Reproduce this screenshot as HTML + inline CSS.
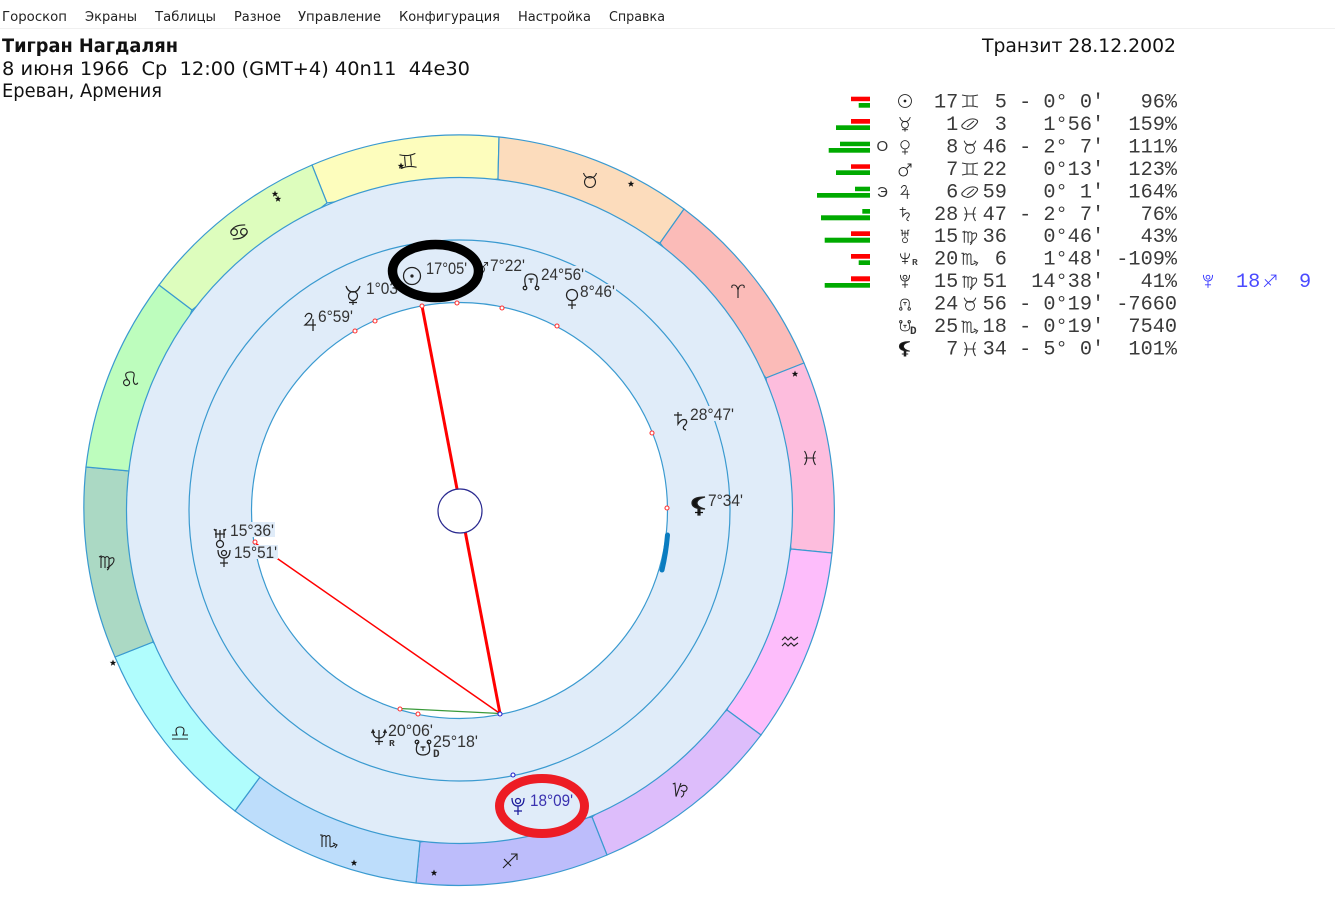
<!DOCTYPE html>
<html lang="ru">
<head>
<meta charset="utf-8">
<title>Транзит</title>
<style>
html,body{margin:0;padding:0;background:#fff;width:1335px;height:900px;overflow:hidden}
svg{display:block}
.m{font:13px "DejaVu Sans","Liberation Sans",sans-serif;fill:#222}
.h{font:19px "DejaVu Sans","Liberation Sans",sans-serif;fill:#111}
.l{font:16.5px "Liberation Sans",sans-serif;fill:#333}
.t{font:20.25px "Liberation Mono",monospace;fill:#3a3a3a;white-space:pre}
.i{fill:none;stroke:#222;stroke-width:1.25}
.s{fill:none;stroke:#222;stroke-width:1.1}
.z path{stroke:#3a9ad0;stroke-width:1.2}
.g{fill:#0a0;}
.r{fill:#f00;}
.dr{fill:#fff;stroke:#f33;stroke-width:1.1}
.db{fill:#fff;stroke:#22c;stroke-width:1.1}
.st{fill:#111;stroke:none}
</style>
</head>
<body>
<svg width="1335" height="900" viewBox="0 0 1335 900" xmlns="http://www.w3.org/2000/svg">
<rect width="1335" height="900" fill="#fff"/>
<rect x="0" y="28" width="1335" height="1" fill="#f0f0f0"/>

<text class="m" x="2" y="21" textLength="65" lengthAdjust="spacingAndGlyphs">Гороскоп</text>
<text class="m" x="85" y="21" textLength="52" lengthAdjust="spacingAndGlyphs">Экраны</text>
<text class="m" x="155" y="21" textLength="61" lengthAdjust="spacingAndGlyphs">Таблицы</text>
<text class="m" x="234" y="21" textLength="47" lengthAdjust="spacingAndGlyphs">Разное</text>
<text class="m" x="298" y="21" textLength="83" lengthAdjust="spacingAndGlyphs">Управление</text>
<text class="m" x="399" y="21" textLength="101" lengthAdjust="spacingAndGlyphs">Конфигурация</text>
<text class="m" x="518" y="21" textLength="73" lengthAdjust="spacingAndGlyphs">Настройка</text>
<text class="m" x="609" y="21" textLength="56" lengthAdjust="spacingAndGlyphs">Справка</text>

<text class="h" x="2" y="52" style="font-weight:700" textLength="176" lengthAdjust="spacingAndGlyphs">Тигран Нагдалян</text>
<text class="h" x="2" y="75" style="white-space:pre" textLength="468" lengthAdjust="spacingAndGlyphs">8 июня 1966  Ср  12:00 (GMT+4) 40n11  44e30</text>
<text class="h" x="2" y="97" textLength="160" lengthAdjust="spacingAndGlyphs">Ереван, Армения</text>
<text class="h" x="982" y="52" textLength="194" lengthAdjust="spacingAndGlyphs">Транзит 28.12.2002</text>

<!-- zodiac ring -->
<g class="z">
<path fill="#fdfdbd" d="M312 165A375.500 375.500 0 0 1 499 137L498 179L327 203Z"/>
<path fill="#fcdcbc" d="M499 137A375.500 375.500 0 0 1 684 209L660 243L498 179Z"/>
<path fill="#fbbbb8" d="M684 209A375.500 375.500 0 0 1 804 363L766 378L660 243Z"/>
<path fill="#fdbddd" d="M804 363A375.500 375.500 0 0 1 832 553L791 549L766 378Z"/>
<path fill="#fdbdfb" d="M832 553A375.500 375.500 0 0 1 761 735L727 710L791 549Z"/>
<path fill="#ddbdfb" d="M761 735A375.500 375.500 0 0 1 607 855L592 817L727 710Z"/>
<path fill="#bdbdfb" d="M607 855A375.500 375.500 0 0 1 416 883L420 842L592 817Z"/>
<path fill="#bdddfb" d="M416 883A375.500 375.500 0 0 1 235 811L260 777L420 842Z"/>
<path fill="#b0fdfd" d="M235 811A375.500 375.500 0 0 1 115 657L153 642L260 777Z"/>
<path fill="#abd9c4" d="M115 657A375.500 375.500 0 0 1 86 467L129 471L153 642Z"/>
<path fill="#bdfdbd" d="M86 467A375.500 375.500 0 0 1 159 285L192 310L129 471Z"/>
<path fill="#ddfdbd" d="M159 285A375.500 375.500 0 0 1 312 165L327 203L192 310Z"/>
</g>

<circle cx="459.500" cy="510.500" r="333" fill="#e0ecf9" stroke="#3a9ad0" stroke-width="1.2"/>
<circle cx="459.500" cy="510.500" r="270.500" fill="none" stroke="#3a9ad0" stroke-width="1.2"/>
<circle cx="459.500" cy="510.500" r="208" fill="#fff" stroke="#3a9ad0" stroke-width="1.2"/>

<!-- thick arc -->
<path d="M667.500 535Q666 553 662 570" fill="none" stroke="#0a7cc0" stroke-width="5" stroke-linecap="round"/>

<!-- aspect lines -->
<path d="M399.500 708.500L500 713.500" stroke="#3a9a3a" stroke-width="1.300" fill="none"/>
<path d="M255 543L500 713.500" stroke="#f00" stroke-width="1.500" fill="none"/>
<path d="M422 306L500 713.500" stroke="#f00" stroke-width="3" fill="none"/>
<circle cx="460" cy="511" r="22" fill="#fff" stroke="#2a2a90" stroke-width="1.200"/>

<!-- aspect dots -->
<circle class="dr" cx="422" cy="306" r="2"/>
<circle class="dr" cx="457" cy="303" r="2"/>
<circle class="dr" cx="502" cy="308" r="2"/>
<circle class="dr" cx="557" cy="326" r="2"/>
<circle class="dr" cx="375" cy="321" r="2"/>
<circle class="dr" cx="355" cy="331" r="2"/>
<circle class="dr" cx="652" cy="433" r="2"/>
<circle class="dr" cx="667" cy="508" r="2"/>
<circle class="dr" cx="255" cy="542" r="2"/>
<circle class="dr" cx="400" cy="709" r="2"/>
<circle class="dr" cx="418" cy="714" r="2"/>
<circle class="db" cx="500" cy="714" r="2"/>
<circle class="db" cx="513" cy="775" r="2"/>

<!-- label backgrounds -->
<g fill="#e0ecf9">
<rect x="230" y="522" width="45" height="15"/>
<rect x="234" y="545" width="44" height="14"/>
<rect x="690" y="406" width="44" height="15"/>
<rect x="541" y="266" width="44" height="15"/>
<rect x="580" y="284" width="36" height="14"/>
</g>

<!-- chart labels -->
<text class="l" x="426" y="274" textLength="41" lengthAdjust="spacingAndGlyphs">17°05'</text>
<text class="l" x="366" y="294" textLength="35" lengthAdjust="spacingAndGlyphs">1°03'</text>
<text class="l" x="318" y="322" textLength="35" lengthAdjust="spacingAndGlyphs">6°59'</text>
<text class="l" x="490" y="271" textLength="35" lengthAdjust="spacingAndGlyphs">7°22'</text>
<text class="l" x="541" y="280" textLength="43" lengthAdjust="spacingAndGlyphs">24°56'</text>
<text class="l" x="580" y="297" textLength="35" lengthAdjust="spacingAndGlyphs">8°46'</text>
<text class="l" x="690" y="420" textLength="44" lengthAdjust="spacingAndGlyphs">28°47'</text>
<text class="l" x="708" y="506" textLength="35" lengthAdjust="spacingAndGlyphs">7°34'</text>
<text class="l" x="230" y="536" textLength="44" lengthAdjust="spacingAndGlyphs">15°36'</text>
<text class="l" x="234" y="558" textLength="43" lengthAdjust="spacingAndGlyphs">15°51'</text>
<text class="l" x="388" y="736" textLength="45" lengthAdjust="spacingAndGlyphs">20°06'</text>
<text class="l" x="433" y="747" textLength="45" lengthAdjust="spacingAndGlyphs">25°18'</text>
<text class="l" x="530" y="806" textLength="43" lengthAdjust="spacingAndGlyphs" style="fill:#3a32b0">18°09'</text>

<!-- chart planets -->
<g class="i">
<g transform="translate(412 276)"><circle r="8.500"/><circle r="1" fill="#222"/></g>
<g transform="translate(353 295)"><path d="M-7-9Q-5-3 0-3Q5-3 7-9M0 5V10M-4 7.500H4"/><circle cy="1" r="4.500"/></g>
<g transform="translate(310 322)"><path d="M-5-5Q-3-10 1-8Q4-5-5 3H6M3-3V9"/></g>
<g transform="translate(482 268) scale(.7)"><circle cx="-2" cy="2" r="5.500"/><path d="M2-2L8-8M3-8H8V-3"/></g>
<g transform="translate(531 281)"><path d="M-5 6Q-9-7 0-7Q9-7 5 6M-2.500-2H2.500M0-2V2"/><circle cx="-6" cy="7" r="1.800"/><circle cx="6" cy="7" r="1.800"/></g>
<g transform="translate(572 298)"><circle cy="-3" r="5.500"/><path d="M0 2.500V11M-4 7H4"/></g>
<g transform="translate(681 421)"><path d="M-7-6H1M-3-9V3Q1-3 5-1Q7 2 3 5Q1 8 5 9"/></g>
<g transform="translate(699 505)"><path fill="#111" d="M6-8Q-7-8-7-2Q-7 4 6 4Q-2 2-2-2Q-2-6 6-8ZM-1 3H1V10H-1Z"/><path d="M-4 7.500H4" stroke="#111"/></g>
<g transform="translate(220 538)"><path d="M-6-9Q-4-6-4-9V0M6-9Q4-6 4-9V0M-5-4H5M0-8V2"/><circle cy="6" r="3.500"/></g>
<g transform="translate(224 558)"><path d="M-6-8Q-6 0 0 0Q6 0 6-8M0 0V9M-4 5H4"/><circle cy="-5" r="2.500"/></g>
<g transform="translate(379 737)"><path d="M-6-6Q-6 1 0 1Q6 1 6-6M0-7V8M-4 4.500H4M-7.500-4L-6-7L-4.500-4M4.500-4L6-7L7.500-4"/></g>
<g transform="translate(423 748)"><path d="M-5-6Q-10 7 0 7Q10 7 5-6M-2.500-1H2.500M0-1V3"/><circle cx="-6" cy="-6" r="1.800"/><circle cx="6" cy="-6" r="1.800"/></g>
<g transform="translate(518 806)" style="stroke:#1a1a9a"><path d="M-6-8Q-6 0 0 0Q6 0 6-8M0 0V9M-4 5H4"/><circle cy="-5" r="2.500"/></g>
</g>
<text x="389" y="746" style="font:bold 9.500px 'Liberation Mono',monospace;fill:#333">R</text>
<text x="433" y="757" style="font:bold 11px 'Liberation Mono',monospace;fill:#333">D</text>

<!-- ring signs -->
<g class="s">
<g transform="translate(408 161) rotate(-5)"><path d="M-8-7Q0-4 8-7M-8 7Q0 4 8 7M-3-5V5M3-5V5"/></g>
<g transform="translate(590 180)"><path d="M-6.500-7Q-5-2 0-2Q5-2 6.500-7"/><circle cy="2" r="5.500"/></g>
<g transform="translate(738 291)"><path d="M0 7V-1Q-1-6-4-6Q-7-6-6-3M0-1Q1-6 4-6Q7-6 6-3"/></g>
<g transform="translate(810 458)"><path d="M-5.500-7Q-1 0-5.500 7M5.500-7Q1 0 5.500 7M-5.500 0H5.500"/></g>
<g transform="translate(790 642)"><path d="M-8-2L-5-5L-2-2L1-5L4-2L8-5M-8 4L-5 1L-2 4L1 1L4 4L8 1"/></g>
<g transform="translate(680 790) rotate(8)"><path d="M-8-5L-6-6L-3 7L0-7M0-3Q2-6 5-5Q8-3 6 0Q4 2 1 0M4 1Q5 5 2 7"/></g>
<g transform="translate(510 861)"><path d="M-7 7L7-7M1-7H7V-1M-6-2L1 5"/></g>
<g transform="translate(329 841)"><path d="M-9-6L-7-6V6M-7-4Q-4-7-3-4V6M-3-4Q0-7 1-4V5Q1 7 6 4M4 2L8 4L6 7"/></g>
<g transform="translate(180 732)"><path d="M-8 7H8M-8 3H-3Q-6-5 0-5Q6-5 3 3H8"/></g>
<g transform="translate(107 562)"><path d="M-8-5L-6-6V6M-6-4Q-4-7-2-4V6M-2-4Q0-7 2-4V5Q2 7 0 8M2-3Q7-6 7-2Q7 2 0 6"/></g>
<g transform="translate(130 379) rotate(-10)"><circle cx="-4" cy="3" r="3"/><path d="M-2 1Q-6-7 0-7Q7-7 4-1Q2 4 4 6Q6 7 7 5"/></g>
<g transform="translate(239 232) rotate(-28) scale(1.1)"><circle cx="-4" cy="-2" r="3"/><circle cx="4" cy="2" r="3"/><path d="M-6-4Q-1-8 8-3M6 4Q1 8-8 3"/></g>
</g>

<!-- ring stars -->
<g class="st">
<path transform="translate(275 194)" d="M0-3.500L.9-1.100L3.300-1.100L1.400.4L2.100 2.800L0 1.400L-2.100 2.800L-1.400.4L-3.300-1.100L-.9-1.100Z"/>
<path transform="translate(278 199)" d="M0-3.500L.9-1.100L3.300-1.100L1.400.4L2.100 2.800L0 1.400L-2.100 2.800L-1.400.4L-3.300-1.100L-.9-1.100Z"/>
<path transform="translate(401 166)" d="M0-3.500L.9-1.100L3.300-1.100L1.400.4L2.100 2.800L0 1.400L-2.100 2.800L-1.400.4L-3.300-1.100L-.9-1.100Z"/>
<path transform="translate(631 184)" d="M0-3.500L.9-1.100L3.300-1.100L1.400.4L2.100 2.800L0 1.400L-2.100 2.800L-1.400.4L-3.300-1.100L-.9-1.100Z"/>
<path transform="translate(795 374)" d="M0-3.500L.9-1.100L3.300-1.100L1.400.4L2.100 2.800L0 1.400L-2.100 2.800L-1.400.4L-3.300-1.100L-.9-1.100Z"/>
<path transform="translate(113 663)" d="M0-3.500L.9-1.100L3.300-1.100L1.400.4L2.100 2.800L0 1.400L-2.100 2.800L-1.400.4L-3.300-1.100L-.9-1.100Z"/>
<path transform="translate(354 863)" d="M0-3.500L.9-1.100L3.300-1.100L1.400.4L2.100 2.800L0 1.400L-2.100 2.800L-1.400.4L-3.300-1.100L-.9-1.100Z"/>
<path transform="translate(434 873)" d="M0-3.500L.9-1.100L3.300-1.100L1.400.4L2.100 2.800L0 1.400L-2.100 2.800L-1.400.4L-3.300-1.100L-.9-1.100Z"/>
</g>

<!-- highlight ellipses -->
<ellipse cx="435.500" cy="271" rx="43" ry="26.500" fill="none" stroke="#000" stroke-width="9.500"/>
<ellipse cx="542" cy="806" rx="42.500" ry="27.500" fill="none" stroke="#ed1c24" stroke-width="9"/>

<!-- bars -->
<rect class="r" x="851" y="96.700" width="19" height="4.500"/><rect class="g" x="858.700" y="103" width="11.300" height="4.700"/>
<rect class="r" x="851" y="119" width="19" height="4.700"/><rect class="g" x="836" y="125.300" width="34" height="4.700"/>
<rect class="g" x="840" y="141.700" width="30" height="4.500"/><rect class="g" x="828.700" y="148" width="41.300" height="4.700"/>
<rect class="r" x="851" y="164.300" width="19" height="4.500"/><rect class="g" x="836" y="170.300" width="34" height="4.700"/>
<rect class="g" x="855" y="186.700" width="15" height="4.500"/><rect class="g" x="817" y="193" width="53" height="4.700"/>
<rect class="g" x="862.300" y="209" width="7.700" height="4.700"/><rect class="g" x="821" y="215.300" width="49" height="5"/>
<rect class="r" x="851" y="231.300" width="19" height="4.700"/><rect class="g" x="824.700" y="237.700" width="45.300" height="5"/>
<rect class="r" x="851" y="254" width="19" height="4.700"/><rect class="g" x="858.700" y="260.300" width="11.300" height="4.700"/>
<rect class="r" x="851" y="276.300" width="19" height="5"/><rect class="g" x="824.700" y="283" width="45.300" height="4.700"/>

<text x="876.500" y="151" style="font:15px 'Liberation Sans',sans-serif;fill:#333">О</text>
<text x="877" y="197" style="font:15px 'Liberation Sans',sans-serif;fill:#333">Э</text>

<!-- table text -->
<text class="t" x="934" y="107.500">17   5 - 0° 0'   96%</text>
<text class="t" x="934" y="130"> 1   3   1°56'  159%</text>
<text class="t" x="934" y="152.400"> 8  46 - 2° 7'  111%</text>
<text class="t" x="934" y="174.900"> 7  22   0°13'  123%</text>
<text class="t" x="934" y="197.300"> 6  59   0° 1'  164%</text>
<text class="t" x="934" y="219.800">28  47 - 2° 7'   76%</text>
<text class="t" x="934" y="242.200">15  36   0°46'   43%</text>
<text class="t" x="934" y="264.700">20   6   1°48' -109%</text>
<text class="t" x="934" y="287.100">15  51  14°38'   41%</text>
<text class="t" x="934" y="309.600">24  56 - 0°19' -7660</text>
<text class="t" x="934" y="332">25  18 - 0°19'  7540</text>
<text class="t" x="934" y="354.500"> 7  34 - 5° 0'  101%</text>
<text class="t" x="1236" y="287.100" style="fill:#4a4aff">18</text>
<text class="t" x="1299" y="287.100" style="fill:#4a4aff">9</text>

<!-- table planets -->
<g class="i" style="stroke-width:1.2">
<g transform="translate(905 101) scale(.76)"><circle r="8.500"/><circle r="1.200" fill="#222"/></g>
<g transform="translate(905 124) scale(.76)"><path d="M-7-9Q-5-3 0-3Q5-3 7-9M0 5V10M-4 7.500H4"/><circle cy="1" r="4.500"/></g>
<g transform="translate(905 147) scale(.76)"><circle cy="-3" r="5.500"/><path d="M0 2.500V10M-4 6.500H4"/></g>
<g transform="translate(905 170) scale(.85)"><circle cx="-2" cy="2" r="5"/><path d="M2-2L7-7M3-7H7V-3"/></g>
<g transform="translate(905 192) scale(.76)"><path d="M-5-5Q-3-10 1-8Q4-5-5 3H6M3-3V9"/></g>
<g transform="translate(905 214) scale(.76)"><path d="M-7-6H1M-3-9V3Q1-3 5-1Q7 2 3 5Q1 8 5 9"/></g>
<g transform="translate(905 236) scale(.7)"><path d="M-6-9Q-4-6-4-9V0M6-9Q4-6 4-9V0M-5-4H5M0-8V2"/><circle cy="6" r="3.500"/></g>
<g transform="translate(905 258) scale(.76)"><path d="M-6-6Q-6 1 0 1Q6 1 6-6M0-7V8M-4 4.500H4"/></g>
<g transform="translate(905 281) scale(.76)"><path d="M-6-8Q-6 0 0 0Q6 0 6-8M0 0V9M-4 5H4"/><circle cy="-5" r="2.500"/></g>
<g transform="translate(905 304) scale(.7)"><path d="M-5 6Q-9-7 0-7Q9-7 5 6M-2.500-2H2.500M0-2V2"/><circle cx="-6" cy="7" r="1.800"/><circle cx="6" cy="7" r="1.800"/></g>
<g transform="translate(905 326) scale(.7)"><path d="M-5-6Q-10 7 0 7Q10 7 5-6M-2.500-1H2.500M0-1V3"/><circle cx="-6" cy="-6" r="1.800"/><circle cx="6" cy="-6" r="1.800"/></g>
<g transform="translate(905 348) scale(.8)"><path fill="#111" d="M6-8Q-7-8-7-2Q-7 4 6 4Q-2 2-2-2Q-2-6 6-8ZM-1 3H1V10H-1Z"/><path d="M-4 7.500H4"/></g>
<g transform="translate(1208 281) scale(.76)" style="stroke:#3a3aff"><path d="M-6-8Q-6 0 0 0Q6 0 6-8M0 0V9M-4 5H4"/><circle cy="-5" r="2.500"/></g>
</g>
<text x="912" y="265" style="font:bold 9.500px 'Liberation Mono',monospace;fill:#444">R</text>
<text x="910" y="334" style="font:bold 11px 'Liberation Mono',monospace;fill:#333">D</text>

<!-- table signs -->
<g class="s" style="stroke:#333">
<g transform="translate(970 101)"><path d="M-8-6Q0-4 8-6M-8 6Q0 4 8 6M-3-5V5M3-5V5"/></g>
<g transform="translate(970 124)"><path d="M-8 1Q-2-6 4-5Q9-4 7-1Q1 7-4 5Q-9 4-8 1ZM-3 3L4-3"/></g>
<g transform="translate(970 147) scale(.9)"><path d="M-6.500-7Q-5-2 0-2Q5-2 6.500-7"/><circle cy="2" r="5"/></g>
<g transform="translate(970 169)"><path d="M-8-6Q0-4 8-6M-8 6Q0 4 8 6M-3-5V5M3-5V5"/></g>
<g transform="translate(970 192)"><path d="M-8 1Q-2-6 4-5Q9-4 7-1Q1 7-4 5Q-9 4-8 1ZM-3 3L4-3"/></g>
<g transform="translate(970 214)"><path d="M-5.500-7Q-1 0-5.500 7M5.500-7Q1 0 5.500 7M-5.500 0H5.500"/></g>
<g transform="translate(970 237) scale(.95)"><path d="M-8-5L-6-6V6M-6-4Q-4-7-2-4V6M-2-4Q0-7 2-4V5Q2 7 0 8M2-3Q7-6 7-2Q7 2 0 6"/></g>
<g transform="translate(970 259) scale(.95)"><path d="M-9-6L-7-6V6M-7-4Q-4-7-3-4V6M-3-4Q0-7 1-4V5Q1 7 6 4M4 2L8 4L6 7"/></g>
<g transform="translate(970 282) scale(.95)"><path d="M-8-5L-6-6V6M-6-4Q-4-7-2-4V6M-2-4Q0-7 2-4V5Q2 7 0 8M2-3Q7-6 7-2Q7 2 0 6"/></g>
<g transform="translate(970 304) scale(.9)"><path d="M-6.500-7Q-5-2 0-2Q5-2 6.500-7"/><circle cy="2" r="5"/></g>
<g transform="translate(970 327) scale(.95)"><path d="M-9-6L-7-6V6M-7-4Q-4-7-3-4V6M-3-4Q0-7 1-4V5Q1 7 6 4M4 2L8 4L6 7"/></g>
<g transform="translate(970 349)"><path d="M-5.500-7Q-1 0-5.500 7M5.500-7Q1 0 5.500 7M-5.500 0H5.500"/></g>
<g transform="translate(1270 281) scale(.85)" style="stroke:#3a3aff"><path d="M-7 7L7-7M1-7H7V-1M-6-2L1 5"/></g>
</g>
</svg>
</body>
</html>
